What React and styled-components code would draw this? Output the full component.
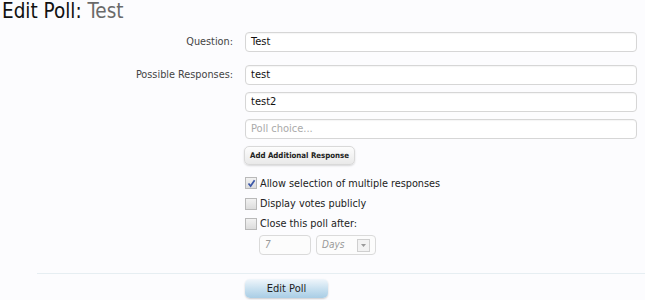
import React from "react";
import styled, { createGlobalStyle } from "styled-components";

const GlobalStyle = createGlobalStyle`
  html, body {
    margin: 0;
    padding: 0;
    background: #fcfcfe;
  }
  body {
    font-family: "DejaVu Sans Condensed", "DejaVu Sans", sans-serif;
    color: #222;
  }
`;

const Page = styled.div`
  width: 645px;
  height: 300px;
  overflow: hidden;
  background: #fcfcfe;
`;

const Title = styled.h1`
  margin: 0;
  padding: 0 0 0 2px;
  font-size: 20.5px;
  font-weight: normal;
  line-height: 22px;
  color: #111;
  height: 26px;
`;

const Muted = styled.span`
  color: #6a6a6a;
`;

const Form = styled.div`
  display: grid;
  grid-template-columns: 233px 392px;
  column-gap: 12px;
  row-gap: 13px;
  padding-top: 6px;
`;

const Label = styled.div`
  text-align: right;
  font-size: 10.8px;
  color: #444;
  line-height: 20px;
`;

const Stack = styled.div`
  display: flex;
  flex-direction: column;
  gap: ${(p) => p.gap || 7}px;
`;

const TextBox = styled.div`
  height: 18px;
  border: 1px solid #d6d6d6;
  border-radius: 4px;
  background: #fff;
  box-shadow: inset 0 1px 1px rgba(0, 0, 0, 0.04);
  font-size: 11px;
  line-height: 18px;
  padding: 0 5px;
  color: ${(p) => (p.placeholder ? "#aaa" : "#111")};
`;

const SmallButton = styled.div`
  align-self: flex-start;
  height: 17px;
  padding: 0 5px;
  margin-left: -1px;
  border: 1px solid #d9d9d9;
  border-radius: 5px;
  background: linear-gradient(#fdfdfd, #e9e9e9);
  box-shadow: 0 1px 2px rgba(0, 0, 0, 0.15);
  font-size: 7.8px;
  font-weight: bold;
  line-height: 17px;
  color: #222;
`;

const Options = styled.div`
  display: flex;
  flex-direction: column;
  padding-top: 1px;
`;

const CheckRow = styled.div`
  display: flex;
  align-items: center;
  gap: 3px;
  height: 20.4px;
  font-size: 10.8px;
  color: #222;
`;

const Box = styled.span`
  width: 10px;
  height: 10px;
  border: 1px solid #b9b9b9;
  background: linear-gradient(#f2f2f2, #dcdcdc);
  display: flex;
  align-items: center;
  justify-content: center;
`;

const Spinner = styled.div`
  display: flex;
  gap: 5px;
  padding: 1px 0 0 14px;
`;

const SmallField = styled.div`
  width: ${(p) => p.width}px;
  height: 18px;
  border: 1px solid #dadada;
  border-radius: 4px;
  background: #fcfcfc;
  font-size: 10px;
  font-style: italic;
  color: #999;
  line-height: 18px;
  padding: 0 5px;
  display: flex;
  align-items: center;
  justify-content: space-between;
  box-sizing: content-box;
`;

const Arrow = styled.span`
  width: 11px;
  height: 11px;
  border: 1px solid #cfcfcf;
  background: #f2f2f2;
  display: flex;
  align-items: center;
  justify-content: center;
`;

const Footer = styled.div`
  margin: 18px 0 0 37px;
  border-top: 1px solid #e6eef2;
  padding: 5px 0 0 208px;
`;

const PrimaryButton = styled.div`
  width: 83px;
  height: 19px;
  border-radius: 5px;
  background: linear-gradient(#f0f6fb, #c6dfef 55%, #a9cde5);
  box-shadow: 0 1px 2px rgba(0, 0, 0, 0.2);
  font-size: 11px;
  line-height: 19px;
  text-align: center;
  color: #222;
`;

const Check = ({ checked, children }) => (
  <CheckRow>
    <Box>
      {checked && (
        <svg width="9" height="9" viewBox="0 0 9 9">
          <path d="M1.5 4.5 L3.6 7 L7.6 1.2" fill="none" stroke="#3b57a8" strokeWidth="1.7" />
        </svg>
      )}
    </Box>
    {children}
  </CheckRow>
);

export default function App() {
  return (
    <Page>
      <GlobalStyle />
      <Title>
        Edit Poll: <Muted>Test</Muted>
      </Title>
      <Form>
        <Label>Question:</Label>
        <TextBox>Test</TextBox>
        <Label>Possible Responses:</Label>
        <Stack>
          <TextBox>test</TextBox>
          <TextBox>test2</TextBox>
          <TextBox placeholder>Poll choice...</TextBox>
          <SmallButton>Add Additional Response</SmallButton>
          <Options>
            <Check checked>Allow selection of multiple responses</Check>
            <Check>Display votes publicly</Check>
            <Check>Close this poll after:</Check>
            <Spinner>
              <SmallField width={40}>7</SmallField>
              <SmallField width={48}>
                Days
                <Arrow>
                  <svg width="5" height="3" viewBox="0 0 5 3">
                    <path d="M0 0 L5 0 L2.5 3 Z" fill="#999" />
                  </svg>
                </Arrow>
              </SmallField>
            </Spinner>
          </Options>
        </Stack>
      </Form>
      <Footer>
        <PrimaryButton>Edit Poll</PrimaryButton>
      </Footer>
    </Page>
  );
}
